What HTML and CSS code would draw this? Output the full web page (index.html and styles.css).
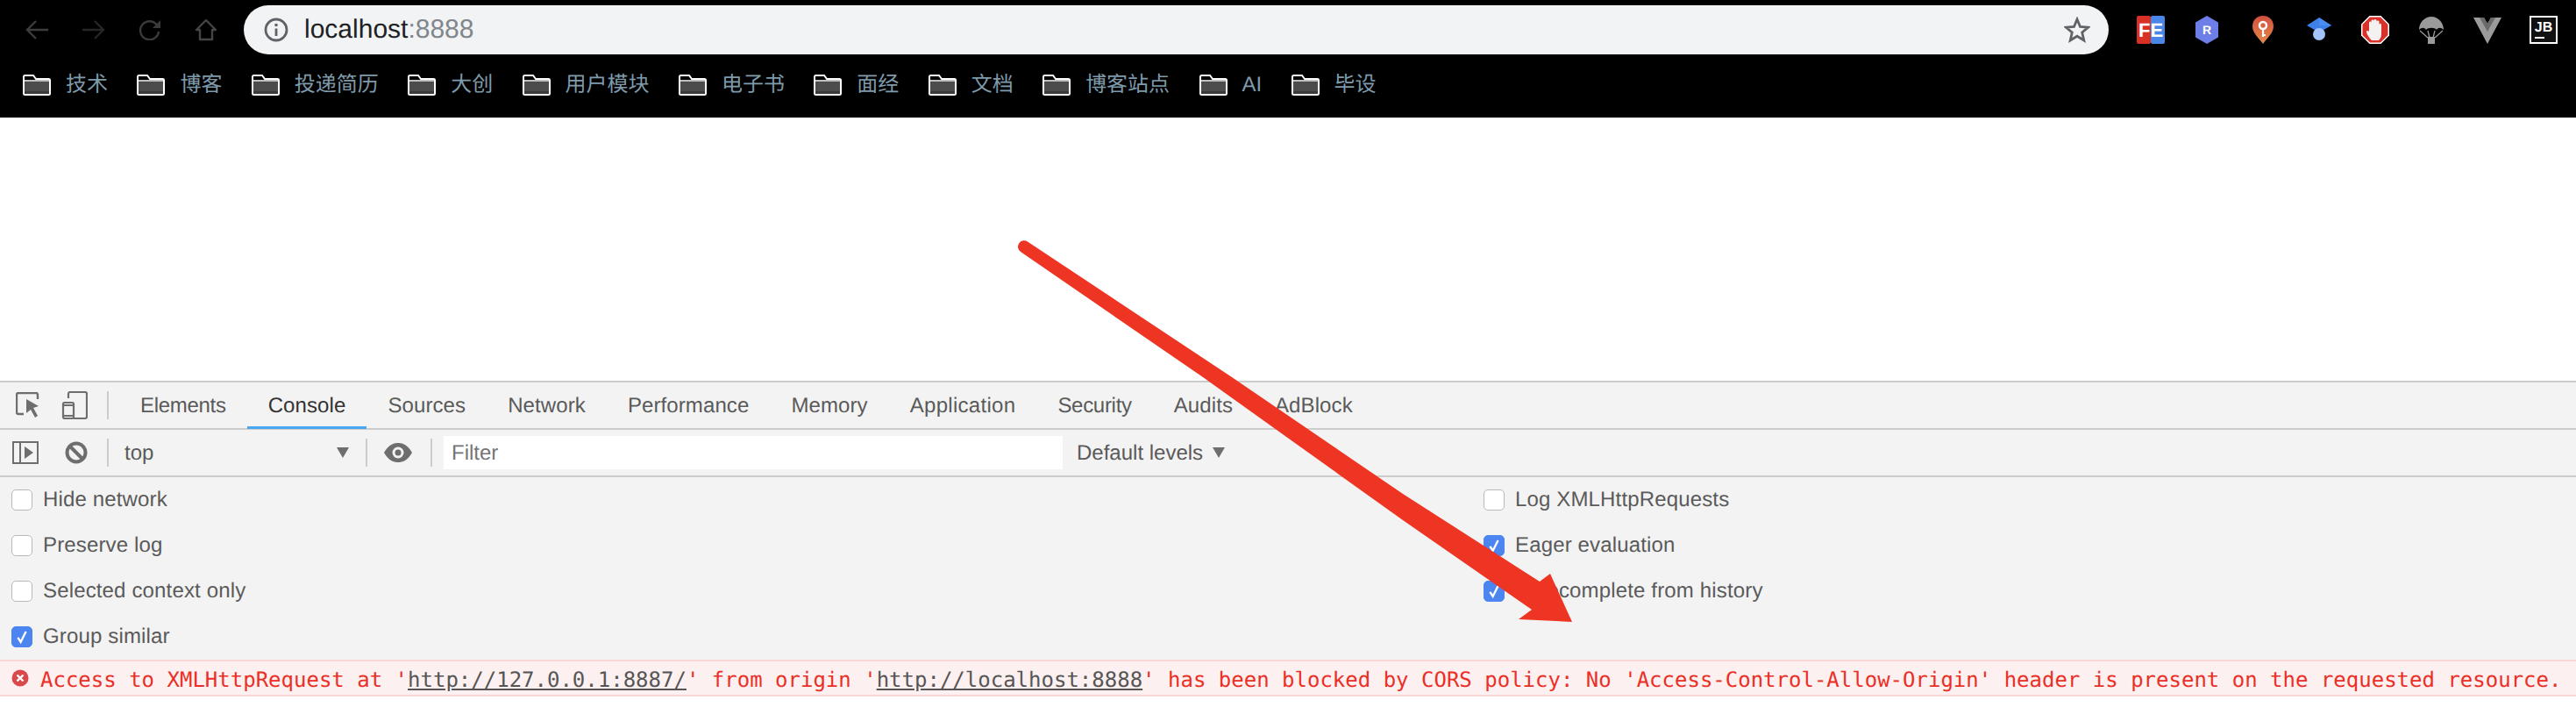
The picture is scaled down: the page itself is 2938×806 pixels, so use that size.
FILE: index.html
```html
<!DOCTYPE html>
<html lang="zh">
<head>
<meta charset="utf-8">
<title>localhost:8888</title>
<link rel="stylesheet" href="styles.css">
</head>
<body>
<svg width="0" height="0" class="defs">
  <symbol id="folder" viewBox="0 0 32 24">
    <path d="M1 22V2.5Q1 1 2.5 1H12L15 5H29.500Q31 5 31 6.500V22Q31 23 29.500 23H2.500Q1 23 1 22Z" fill="#000" stroke="#fff" stroke-width="2"/>
    <rect x="2" y="8" width="28" height="11" fill="#4c4c4c"/>
    <rect x="2" y="19" width="28" height="3" fill="#3a3a3a"/>
    <path d="M1 7H31" stroke="#fff" stroke-width="1.500"/>
  </symbol>
  <symbol id="check" viewBox="0 0 24 24">
    <path d="M7 13L10.500 18.500L17 5.500" fill="none" stroke="#fff" stroke-width="2.600"/>
  </symbol>
</svg>

<header class="chrome">
  <div class="navrow">
    <svg class="nav nav-back" viewBox="0 0 28 24"><path d="M27 12H3M13 2L3 12L13 22" fill="none" stroke="#3d3d3d" stroke-width="2.400"/></svg>
    <svg class="nav nav-fwd" viewBox="0 0 28 24"><path d="M1 12H25M15 2L25 12L15 22" fill="none" stroke="#262626" stroke-width="2.400"/></svg>
    <svg class="nav nav-reload" viewBox="0 0 28 24"><path d="M22 6.500A10.500 10.500 0 1 0 24 14" fill="none" stroke="#3a3a3a" stroke-width="2.400"/><path d="M26 1V10H17Z" fill="#3a3a3a"/></svg>
    <svg class="nav nav-home" viewBox="0 0 26 26"><path d="M13 2L24 13H20V24H6V13H2Z" fill="none" stroke="#444" stroke-width="2.400" stroke-linejoin="round"/></svg>
    <div class="omnibox">
      <svg class="info" viewBox="0 0 28 28"><circle cx="14" cy="14" r="12" fill="none" stroke="#5f6368" stroke-width="2.800"/><path d="M14 12.500V21" stroke="#5f6368" stroke-width="2.800"/><circle cx="14" cy="8.500" r="1.800" fill="#5f6368"/></svg>
      <span class="url">localhost<span class="url-port">:8888</span></span>
      <svg class="star" viewBox="0 0 30 30"><path d="M15 3L18.500 11.500L27.500 12.200L20.700 18L22.800 27L15 22.200L7.200 27L9.300 18L2.500 12.200L11.500 11.500Z" fill="none" stroke="#5f6368" stroke-width="2.800"/></svg>
    </div>
    <div class="exts">
      <svg class="ext" viewBox="0 0 32 32"><rect width="16" height="32" y="0" rx="2" fill="#d93025"/><rect x="16" width="16" height="32" rx="2" fill="#4a86e8"/><text x="16" y="24" class="ext-fe">FE</text></svg>
      <svg class="ext" viewBox="0 0 32 32"><path d="M16 0L29 7.500V24.500L16 32L3 24.500V7.500Z" fill="#6d7ee8"/><text x="16" y="21" class="ext-r">R</text></svg>
      <svg class="ext" viewBox="0 0 32 32"><defs><linearGradient id="pin" x1="0" y1="0" x2="0" y2="1"><stop offset="0" stop-color="#d2503f"/><stop offset="1" stop-color="#e28a4a"/></linearGradient></defs><path d="M16 0C8 0 4 6 4 12C4 20 12 26 16 32C20 26 28 20 28 12C28 6 24 0 16 0Z" fill="url(#pin)"/><circle cx="16" cy="11" r="4" fill="none" stroke="#fff" stroke-width="2.500"/><path d="M16 15V24M16 22H19" stroke="#fff" stroke-width="2.200" fill="none"/></svg>
      <svg class="ext" viewBox="0 0 32 32"><path d="M16 2L30 11L16 19L2 11Z" fill="#3f7fe8"/><path d="M16 2L30 11L16 11Z" fill="#4a8df0"/><circle cx="16" cy="21" r="7" fill="#a3c3fb"/></svg>
      <svg class="ext" viewBox="0 0 32 32"><path d="M9.500 0H22.500L32 9.500V22.500L22.500 32H9.500L0 22.500V9.500Z" fill="#fff"/><path d="M10 1.500H22L30.500 10V22L22 30.500H10L1.500 22V10Z" fill="#d9302a"/><path d="M10 26C8 23 6 20 6 18C6 16.500 8 16.500 9 18V8C9 6 11.500 6 11.500 8V6C11.500 4 14.500 4 14.500 6V5.500C14.500 3.500 17.500 3.500 17.500 5.500V7C17.500 5 20.500 5 20.500 7V10C20.500 8.500 23 8.500 23 10V20C23 24 22 26 20 28H12Z" fill="#f5f1f0"/></svg>
      <svg class="ext" viewBox="0 0 32 32"><path d="M2 16C2 8 8 1 16 1S30 8 30 16C27 13 24 13 22 16C20 13 12 13 10 16C8 13 5 13 2 16Z" fill="#9a9a9a"/><path d="M3 17L12 25M29 17L20 25M12 17L14 25M20 17L18 25" stroke="#9a9a9a" stroke-width="1.300"/><rect x="12" y="24" width="8" height="8" fill="#9a9a9a"/></svg>
      <svg class="ext" viewBox="0 0 32 32"><path d="M0 2H12L16 9L20 2H32L16 32Z" fill="#9b9b9b"/><path d="M7 2H12L16 9L20 2H25L16 18Z" fill="#6a6a6a"/></svg>
      <svg class="ext" viewBox="0 0 32 32"><rect x="1" y="1" width="30" height="30" fill="#111" stroke="#fff" stroke-width="2"/><text x="16" y="18" class="ext-jb">JB</text><rect x="6" y="24" width="11" height="2" fill="#fff"/></svg>
    </div>
  </div>
  <nav class="bookmarks">
    <a class="bm"><svg class="folder"><use href="#folder"/></svg><span>技术</span></a>
    <a class="bm"><svg class="folder"><use href="#folder"/></svg><span>博客</span></a>
    <a class="bm"><svg class="folder"><use href="#folder"/></svg><span>投递简历</span></a>
    <a class="bm"><svg class="folder"><use href="#folder"/></svg><span>大创</span></a>
    <a class="bm"><svg class="folder"><use href="#folder"/></svg><span>用户模块</span></a>
    <a class="bm"><svg class="folder"><use href="#folder"/></svg><span>电子书</span></a>
    <a class="bm"><svg class="folder"><use href="#folder"/></svg><span>面经</span></a>
    <a class="bm"><svg class="folder"><use href="#folder"/></svg><span>文档</span></a>
    <a class="bm"><svg class="folder"><use href="#folder"/></svg><span>博客站点</span></a>
    <a class="bm"><svg class="folder"><use href="#folder"/></svg><span>AI</span></a>
    <a class="bm"><svg class="folder"><use href="#folder"/></svg><span>毕设</span></a>
  </nav>
</header>

<main class="viewport"></main>

<section class="devtools">
  <div class="tabbar">
    <svg class="dt-inspect" viewBox="0 0 28 30"><path d="M25 8V3Q25 1 23 1H3Q1 1 1 3V23Q1 25 3 25H9" fill="none" stroke="#6e6e6e" stroke-width="2.400"/><path d="M13 9L27 17L21 19L26 28L23 30L18 21L13 25Z" fill="#6e6e6e" transform="translate(-1 -1)"/></svg>
    <svg class="dt-device" viewBox="0 0 30 32"><path d="M8 8V3Q8 1 10 1H27Q29 1 29 3V29Q29 31 27 31H14" fill="none" stroke="#6e6e6e" stroke-width="2.200"/><rect x="2" y="13" width="12" height="18" rx="1.500" fill="none" stroke="#6e6e6e" stroke-width="2.200"/><path d="M2 16H14M2 28H14" stroke="#6e6e6e" stroke-width="2"/></svg>
    <i class="sep sep-first"></i>
    <span class="tab tab-tight">Elements</span>
    <span class="tab tab-active">Console</span>
    <span class="tab">Sources</span>
    <span class="tab">Network</span>
    <span class="tab">Performance</span>
    <span class="tab">Memory</span>
    <span class="tab tab-loose">Application</span>
    <span class="tab tab-tight">Security</span>
    <span class="tab">Audits</span>
    <span class="tab">AdBlock</span>
  </div>
  <div class="toolbar">
    <svg class="dt-dock" viewBox="0 0 30 26"><rect x="1" y="1" width="28" height="24" fill="none" stroke="#6e6e6e" stroke-width="2"/><path d="M9 1V25" stroke="#6e6e6e" stroke-width="2"/><path d="M14 6L24 13L14 20Z" fill="#6e6e6e"/></svg>
    <svg class="dt-block" viewBox="0 0 26 26"><circle cx="13" cy="13" r="10.500" fill="none" stroke="#6e6e6e" stroke-width="4"/><path d="M6 6L20 20" stroke="#6e6e6e" stroke-width="4"/></svg>
    <i class="sep sep-tool"></i>
    <span class="ctx">top</span>
    <svg class="tri tri-ctx" viewBox="0 0 14 12"><path d="M0 0H14L7 12Z" fill="#6e6e6e"/></svg>
    <i class="sep sep-ctx"></i>
    <svg class="dt-eye" viewBox="0 0 32 22"><path d="M0 11C5 2 11 0 16 0S27 2 32 11C27 20 21 22 16 22S5 20 0 11Z" fill="#6e6e6e"/><circle cx="16" cy="11" r="6.500" fill="#f3f3f3"/><circle cx="16" cy="11" r="3.500" fill="#6e6e6e"/></svg>
    <i class="sep sep-eye"></i>
    <div class="filter">Filter</div>
    <span class="levels">Default levels</span>
    <svg class="tri tri-lv" viewBox="0 0 14 12"><path d="M0 0H14L7 12Z" fill="#6e6e6e"/></svg>
  </div>
  <div class="settings">
    <div class="col col-left">
      <label class="opt"><i class="box"></i>Hide network</label>
      <label class="opt"><i class="box"></i>Preserve log</label>
      <label class="opt"><i class="box"></i>Selected context only</label>
      <label class="opt"><i class="box box-on"><svg class="tick"><use href="#check"/></svg></i>Group similar</label>
    </div>
    <div class="col">
      <label class="opt"><i class="box"></i>Log XMLHttpRequests</label>
      <label class="opt"><i class="box box-on"><svg class="tick"><use href="#check"/></svg></i>Eager evaluation</label>
      <label class="opt"><i class="box box-on"><svg class="tick"><use href="#check"/></svg></i>Autocomplete from history</label>
    </div>
  </div>
  <div class="error">
    <svg class="err-icon" viewBox="0 0 20 20"><circle cx="10" cy="10" r="9.500" fill="#d9484a"/><path d="M6.500 6.500L13.500 13.500M13.500 6.500L6.500 13.500" stroke="#fff" stroke-width="2.400"/></svg>
    <span class="err-text">Access to XMLHttpRequest at '<a class="err-link">http://127.0.0.1:8887/</a>' from origin '<a class="err-link">http://localhost:8888</a>' has been blocked by CORS policy: No 'Access-Control-Allow-Origin' header is present on the requested resource.</span>
  </div>
</section>
<div class="tail"></div>

<svg class="arrow" viewBox="0 0 2938 806"><path d="M1172 275.500L1405 430L1600 563L1756 663L1768 654L1793 709L1732 706L1747 695L1600 593L1372 430L1164 287A6.800 6.800 0 0 1 1172 275.500Z" fill="#ee3524"/></svg>
</body>
</html>
```

FILE: styles.css
```css
* { box-sizing: border-box; }
html, body { margin: 0; padding: 0; }
body {
  width: 2938px;
  height: 806px;
  overflow: hidden;
  position: relative;
  display: flex;
  flex-direction: column;
  background: #fff;
  font-family: "Liberation Sans", "Noto Sans CJK SC", sans-serif;
  text-rendering: geometricPrecision;
}
.defs { position: absolute; }
svg { display: block; flex: none; }
i { display: block; flex: none; }

.chrome { height: 134px; background: #000; flex: none; padding-top: 6px; }
.navrow { display: flex; align-items: center; height: 56px; }
.nav { height: 24px; }
.nav-back { width: 28px; margin-left: 28px; }
.nav-fwd { width: 28px; margin-left: 37px; }
.nav-reload { width: 28px; margin-left: 36px; }
.nav-home { width: 26px; height: 26px; margin-left: 37px; }
.omnibox {
  margin-left: 30px;
  width: 2127px;
  height: 56px;
  border-radius: 28px;
  background: #f1f3f4;
  display: flex;
  align-items: center;
  padding-left: 23px;
  padding-right: 21px;
}
.info { width: 28px; height: 28px; }
.url { margin-left: 18px; font-size: 30px; color: #202124; flex: 1; }
.url-port { color: #80868b; }
.star { width: 30px; height: 30px; }
.exts { display: flex; margin-left: 32px; gap: 32px; }
.ext { width: 32px; height: 32px; }
.ext-fe { font: bold 22px "Liberation Sans", sans-serif; fill: #fff; text-anchor: middle; }
.ext-r { font: bold 14px "Liberation Sans", sans-serif; fill: #fff; text-anchor: middle; }
.ext-jb { font: bold 16px "Liberation Sans", sans-serif; fill: #fff; text-anchor: middle; }

.bookmarks { display: flex; align-items: center; height: 36px; margin-top: 17px; padding-left: 26px; gap: 33.4px; }
.bm { display: flex; align-items: center; gap: 17px; color: #7f9aaa; font-size: 24px; line-height: 36px; }
.folder { width: 32px; height: 24px; }

.viewport { height: 300px; flex: none; background: #fff; }

.devtools { flex: none; background: #f3f3f3; border-top: 2px solid #ccc; color: #5a5a5a; font-size: 24px; }
.tabbar { display: flex; align-items: center; height: 54px; border-bottom: 2px solid #ccc; }
.dt-inspect { width: 28px; height: 30px; margin-left: 18px; }
.dt-device { width: 30px; height: 32px; margin-left: 24px; }
.sep { width: 2px; height: 32px; background: #ccc; }
.sep-first { margin-left: 22px; margin-right: 12px; }
.tab { height: 52px; padding: 0 24px; line-height: 54px; color: #5a5a5a; letter-spacing: 0.1px; }
.tab-tight { letter-spacing: -0.3px; }
.tab-loose { letter-spacing: 0.3px; }
.tab-active { color: #333; box-shadow: inset 0 -3px 0 #4aa6ee; height: 53px; align-self: flex-start; }

.toolbar { display: flex; align-items: center; height: 54px; border-bottom: 2px solid #ccc; }
.dt-dock { width: 30px; height: 26px; margin-left: 14px; }
.dt-block { width: 26px; height: 26px; margin-left: 30px; }
.sep-tool { margin-left: 22px; }
.ctx { margin-left: 18px; width: 242px; color: #5a5a5a; padding-top: 2px; }
.tri { width: 14px; height: 12px; }
.sep-ctx { margin-left: 19px; }
.dt-eye { width: 32px; height: 22px; margin-left: 19px; }
.sep-eye { margin-left: 21px; }
.filter {
  margin-left: 13px;
  width: 706px;
  height: 38px;
  background: #fff;
  color: #757575;
  line-height: 40px;
  padding-left: 9px;
}
.levels { margin-left: 16px; padding-top: 2px; }
.tri-lv { margin-left: 11px; }

.settings { display: flex; height: 208px; padding-left: 13px; }
.col { display: flex; flex-direction: column; }
.col-left { width: 1679px; }
.opt { display: flex; align-items: center; height: 52px; gap: 12px; color: #5a5a5a; letter-spacing: 0.15px; line-height: 30px; }
.box {
  width: 24px;
  height: 24px;
  border-radius: 5px;
  background: #fff;
  border: 1px solid #b8b8b8;
}
.box-on { background: #4d85f0; border-color: #4d85f0; }
.tick { width: 22px; height: 22px; }

.error {
  height: 42px;
  background: #fdf0f0;
  border-top: 2px solid #f8d7d7;
  border-bottom: 2px solid #f8d7d7;
  display: flex;
  align-items: center;
  padding-left: 13px;
}
.err-icon { width: 20px; height: 20px; margin-right: 13px; }
.err-text { font: 24px "DejaVu Sans Mono", monospace; color: #ea2f26; white-space: pre; margin-top: 4px; }
.err-link { color: #555; text-decoration: underline; }
.tail { flex: 1; background: #fff; }

.arrow { position: absolute; left: 0; top: 0; width: 2938px; height: 806px; pointer-events: none; }
```
